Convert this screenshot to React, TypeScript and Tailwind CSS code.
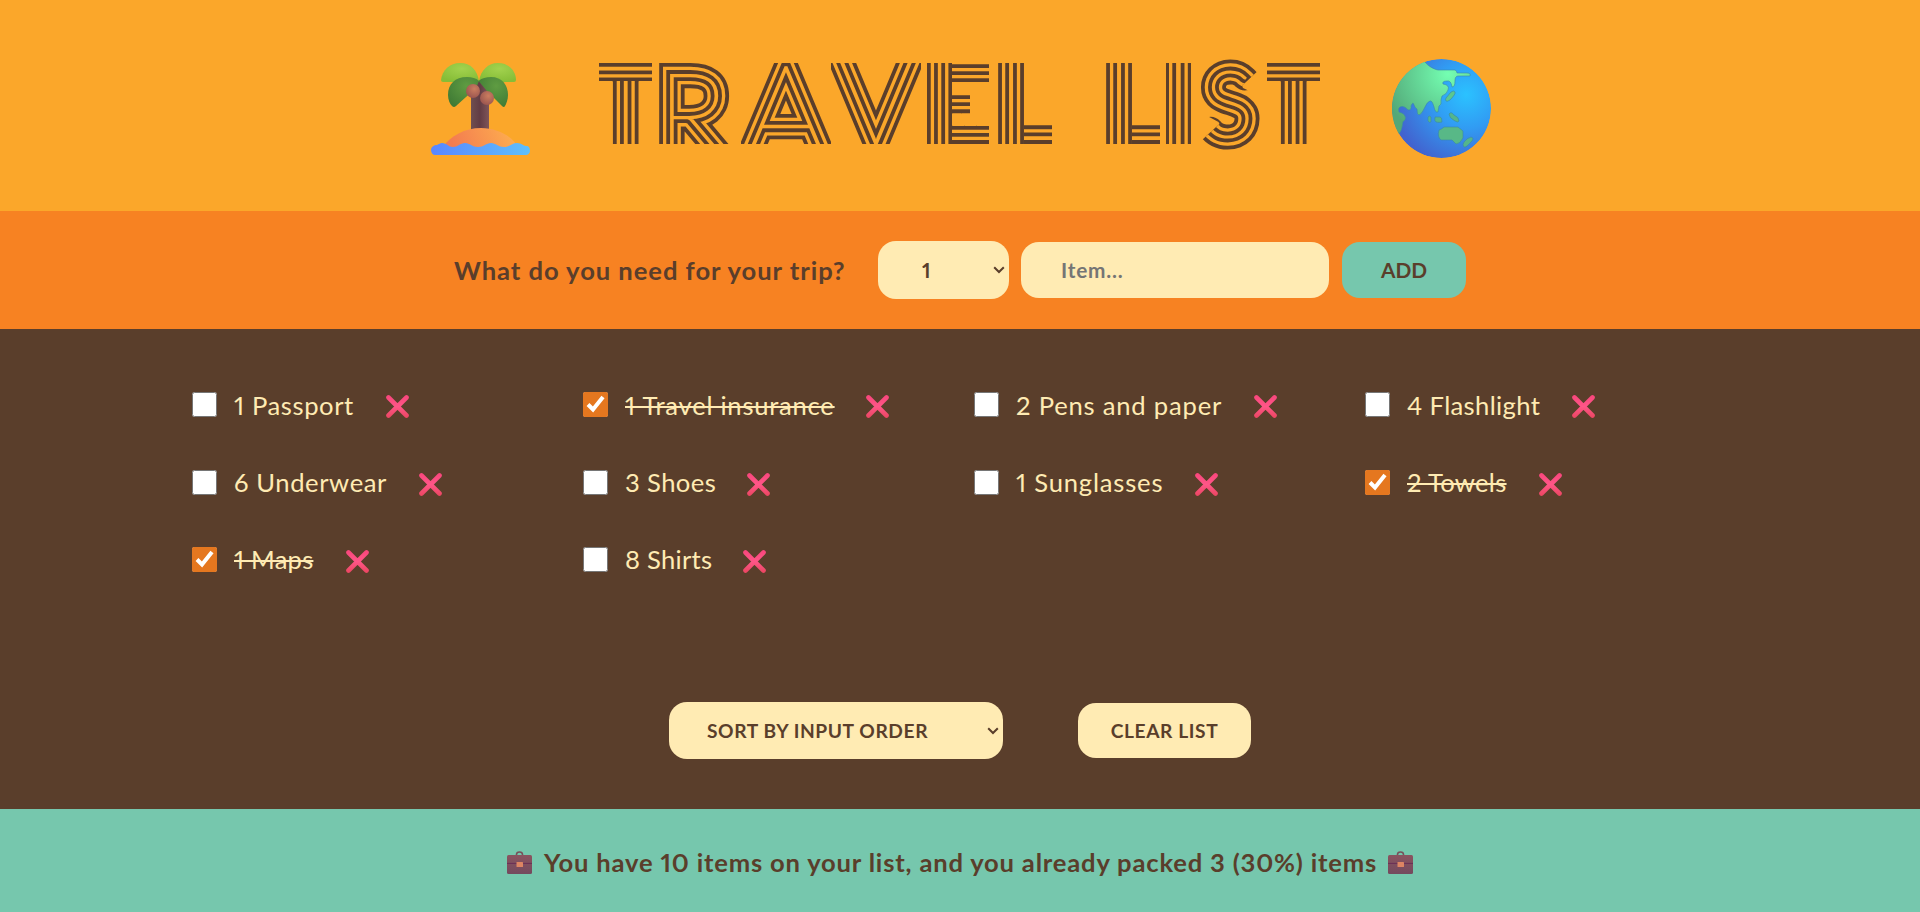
import React from "react";

/* A slice of a letter: x, y, width, height on the canvas, and how far the letter is moved inside it. */
type Slice = [number, number, number, number, number, number];
type Glyph = { ch: string; w: number; ml: number; x: number; y: number; size: number; middle?: boolean; miter?: number; clip?: string; slices?: Slice[] };

const T: Glyph = {
  ch: "T", w: 53, ml: 0, x: 26.5, y: 105.1, size: 133, middle: true,
  slices: [
    ...[0, 1, 2, 3, 4].map((k): Slice => [13 * k, 7, 13, 18, 13 * k, 0]),
    [13, 25, 27, 63, 0, 0],
  ],
};
const L: Glyph = {
  ch: "L", w: 54, ml: 0, x: -5.3, y: 83.2, size: 150,
  slices: [[0, 7, 26, 41, 0, 0], [0, 48, 26, 40, 0, 40], [26, 66, 28, 22, 0, 0]],
};
const E: Glyph = {
  ch: "E", w: 62, ml: 6, x: 0.3, y: 83, size: 101,
  slices: [
    ...Array.from({ length: 11 }, (_, k): Slice => [0, 7 + 8 * k, 25, 8, 0, 8 * k - 19]),
    ...[0, 12, 24].map((d): Slice => [25 + d, 7, 13, 19, d, 0]),
    ...[0, 9].map((d): Slice => [25 + d, 38, 9, 20, d, -2.8]),
    ...[0, 12, 24].map((d): Slice => [25 + d, 69, 13, 19, d, 0]),
  ],
};

const travel: Glyph[] = [
  T,
  { ch: "R", w: 78, ml: 7, x: -1.5, y: 101.8, size: 118, miter: 2 },
  { ch: "A", w: 90, ml: 4, x: 45, y: 102, size: 131, middle: true },
  { ch: "V", w: 90, ml: 0, x: 45, y: 88, size: 131, middle: true },
  E,
  { ...L, ml: 9 },
];

const list: Glyph[] = [
  L,
  { ch: "I", w: 25, ml: 6, x: 12.5, y: 120, size: 200, middle: true },
  {
    ch: "S", w: 64, ml: 7, x: 31, y: 80.5, size: 92, middle: true,
    clip: "M0 0H64V12L62 13 44 29.500 45 32 64 41V96H0V85L4 84 21.500 68 20.500 66 0 55Z",
  },
  { ...T, ml: 5 },
];

const bands: [string, number][] = [
  ["#5a3e2b", 24],
  ["#fba72a", 16.4],
  ["#5a3e2b", 9.8],
  ["#fba72a", 2.2],
];

function StripedLetter({ g, id }: { g: Glyph; id: string }) {
  const slices: Slice[] = g.slices ?? [[0, 0, g.w, 96, 0, 0]];
  return (
    <svg width={g.w} height="96" viewBox={`0 0 ${g.w} 96`} style={{ marginLeft: g.ml }} className="block shrink-0">
      <defs>
        <clipPath id={`${id}-clip`}>
          <path d={g.clip ?? `M0 7H${g.w}V88H0Z`} />
        </clipPath>
        <text id={id} x={g.x} y={g.y} textAnchor={g.middle ? "middle" : "start"} fontSize={g.size} fontWeight="100" fontFamily="Lato, sans-serif">
          {g.ch}
        </text>
        {slices.map(([x, y, w, h], i) => (
          <clipPath key={i} id={`${id}-slice-${i}`}>
            <rect x={x} y={y} width={w} height={h} />
          </clipPath>
        ))}
      </defs>
      <g clipPath={`url(#${id}-clip)`} strokeLinejoin="miter" strokeMiterlimit={g.miter ?? 6}>
        {slices.map(([, , , , dx, dy], i) => (
          <g key={i} clipPath={`url(#${id}-slice-${i})`}>
            {bands.map(([c, w]) => (
              <use key={w} href={`#${id}`} x={dx} y={dy} fill={c} stroke={c} strokeWidth={w} />
            ))}
          </g>
        ))}
      </g>
    </svg>
  );
}

function Palm() {
  return (
    <svg width="99" height="93" viewBox="0 0 99 93" className="block shrink-0">
      <defs>
        <linearGradient id="sea" x1="0" x2="1"><stop offset="0" stopColor="#5a86ff" /><stop offset="1" stopColor="#5fc0fb" /></linearGradient>
        <linearGradient id="sand" x1="0.1" y1="0.6" x2="1" y2="0.5"><stop offset="0" stopColor="#f37c50" /><stop offset="1" stopColor="#feb04f" /></linearGradient>
        <linearGradient id="trunk" x1="0" x2="1"><stop offset="0" stopColor="#6f4f50" /><stop offset="0.5" stopColor="#623c44" /><stop offset="1" stopColor="#7f5558" /></linearGradient>
        <radialGradient id="leafA" cx="0.55" cy="0.3" r="0.7"><stop offset="0" stopColor="#a2d24e" /><stop offset="1" stopColor="#86bd37" /></radialGradient>
        <radialGradient id="leafB" cx="0.6" cy="0.3" r="0.75"><stop offset="0" stopColor="#5f9c42" /><stop offset="1" stopColor="#407b35" /></radialGradient>
        <radialGradient id="nut" cx="0.6" cy="0.35" r="0.7"><stop offset="0" stopColor="#cb7d5f" /><stop offset="1" stopColor="#99544f" /></radialGradient>
      </defs>
      <path d="M47 18h2l9 12v40H40V30z" fill="url(#trunk)" />
      <path d="M12 84C19 73 34 65 50 65s31 8 37 19z" fill="url(#sand)" />
      <path d="M12 19q-2 0-2-2C11 7 19 0 29 0c11 0 17 7 19 18L40 19z" fill="url(#leafA)" />
      <path d="M48 18C50 7 57 0 67 0c11 0 18 8 18 17q0 2-2 2H58z" fill="url(#leafA)" />
      <path d="M48 18C45 15 41 14 36 14 24 14 17 21 17 32c0 5 2 9 4 11q2 2 4 0L45 25z" fill="url(#leafB)" />
      <path d="M47.500 18C51 15 55 14 60 14c11 0 17 8 17 18 0 5-2 9-3 11q-1 2-3 0L56 28z" fill="url(#leafB)" />
      <circle cx="42" cy="28" r="7" fill="url(#nut)" />
      <circle cx="56" cy="35" r="7" fill="url(#nut)" />
      <path d="M0 87c0-3 3-5 6-5 2-1 3-2 5-2 5 0 6 4 11 4s7-4 12-4 7 4 13 4 8-4 13-4 7 4 13 4 8-4 13-4c5 0 6 3 9 3s4 2 4 5c0 2-2 4-4 4H4c-2 0-4-2-4-5z" fill="url(#sea)" />
    </svg>
  );
}

function Globe() {
  return (
    <svg width="99" height="99" viewBox="0 0 99 99" className="block shrink-0">
      <defs>
        <radialGradient id="ocean" cx="0.75" cy="0.36" r="0.75"><stop offset="0" stopColor="#2bc2ff" /><stop offset="0.45" stopColor="#319cf3" /><stop offset="1" stopColor="#4263cf" /></radialGradient>
        <radialGradient id="land" gradientUnits="userSpaceOnUse" cx="56" cy="15" r="66"><stop offset="0" stopColor="#74ffb2" /><stop offset="1" stopColor="#53a878" /></radialGradient>
        <clipPath id="disc"><circle cx="49.5" cy="49.5" r="49.5" /></clipPath>
      </defs>
      <g clipPath="url(#disc)">
        <circle cx="49.5" cy="49.5" r="49.5" fill="url(#ocean)" />
        <g stroke="#3987ad" strokeWidth="0.6">
          <path d="M31 0C34 6 41 10 46 11h17q2 1 2 3h10q4 0 3 3H66q-3 0-3 5 0 6-3 6-1-7-5-6-5 0-4 3 7 1 5 6-1 4-6 6l-1 4q1 5-2 6l-1 6q-3 1-4-5-2-7-4-6-3 1-5 6-3 7-6 8-2 0-2-6-2-1-3-4-1-4-3 1 1 4-3 4-4-5-8-3-2 1-1 5 5 1 6 4 2 3-2 6-1 9-4 12L-2 78V0z" fill="url(#land)" />
          <path d="M54 39l5-6q3-2 4 0 1 2-5 8-3 2-4 1-1-1 0-3z" fill="#5cc78e" />
          <path d="M36 58q1-2 3 0v5q-2 1-3-1zM43 58h5q2 0 2 5-3 1-6 0-2-1-1-5zM57 55q2-3 5 1 5 2 5 6-1 2-4 0-6-3-6-7z" fill="#54b58c" />
          <path d="M47 71q3-1 5-3h14l5 4v7q-3 6-7 6l-4-4H49q-4-3-2-10z" fill="#58b887" />
          <path d="M72 83q3-4 7-5 4 1 0 5-5 6-7 5-2-2 0-5z" fill="#54b58c" />
        </g>
      </g>
    </svg>
  );
}

function Cross() {
  return (
    <svg width="23" height="23" viewBox="0 0 23 23" className="block">
      <defs>
        <linearGradient id="cross" x1="0" y1="0" x2="0" y2="23" gradientUnits="userSpaceOnUse"><stop offset="0" stopColor="#f8457b" /><stop offset="0.5" stopColor="#ff5688" /><stop offset="1" stopColor="#ea4560" /></linearGradient>
      </defs>
      <path d="M2.500 2.500l18 18M20.500 2.500l-18 18" stroke="url(#cross)" strokeWidth="4.600" strokeLinecap="round" />
    </svg>
  );
}

function Briefcase() {
  return (
    <svg width="25" height="23" viewBox="0 0 25 23" className="block shrink-0">
      <defs>
        <linearGradient id="case" x1="0" y1="0" x2="0" y2="1"><stop offset="0" stopColor="#8a535f" /><stop offset="1" stopColor="#744a5e" /></linearGradient>
      </defs>
      <path d="M9.500 4.500V3.600Q9.500 1 12.500 1t3 2.600v.9" fill="none" stroke="#76505a" strokeWidth="1.600" />
      <rect y="4" width="25" height="19" rx="1.500" fill="url(#case)" />
      <path d="M0 12.400h25" stroke="#6a2f56" strokeWidth="1" />
      <rect x="9.500" y="11" width="6.500" height="5" rx="0.600" fill="#dd8463" />
    </svg>
  );
}

function Chevron() {
  return (
    <svg width="12" height="8" viewBox="0 0 12 8" className="pointer-events-none absolute right-[4px] top-1/2 -mt-[4px]" fill="none">
      <path d="M1.200 1.200L6 6l4.800-4.800" stroke="#5a3e2b" strokeWidth="2" />
    </svg>
  );
}

type Item = { text: string; width: number; track: number; packed?: boolean };

const items: Item[] = [
  { text: "1 Passport", width: 120, track: 0.6 },
  { text: "1 Travel insurance", width: 209, track: 0.75, packed: true },
  { text: "2 Pens and paper", width: 206, track: 0.8 },
  { text: "4 Flashlight", width: 133, track: 0.35 },
  { text: "6 Underwear", width: 153, track: 0.6 },
  { text: "3 Shoes", width: 90, track: 0.4 },
  { text: "1 Sunglasses", width: 147, track: 0.8 },
  { text: "2 Towels", width: 100, track: 0.3, packed: true },
  { text: "1 Maps", width: 80, track: 0.2, packed: true },
  { text: "8 Shirts", width: 86, track: 0.25 },
];

export default function App() {
  return (
    <div className="flex h-[912px] w-[1920px] flex-col overflow-hidden bg-[#5a3e2b] font-['Lato',sans-serif] text-[#5a3e2b] proportional-nums">
      <header className="flex h-[211px] shrink-0 bg-[#fba72a] pl-[431px]">
        <div className="mt-[63px]"><Palm /></div>
        <h1 className="ml-[69px] mt-[56px] flex w-[722px]">
          <span className="flex">{travel.map((g, i) => <StripedLetter key={i} g={g} id={`travel-${i}`} />)}</span>
          {" "}
          <span className="ml-[54px] flex">{list.map((g, i) => <StripedLetter key={i} g={g} id={`list-${i}`} />)}</span>
        </h1>
        <div className="ml-[71px] mt-[59px]"><Globe /></div>
      </header>

      <form className="flex h-[118px] shrink-0 items-center bg-[#f78222] pl-[454px]">
        <h3 className="w-[424px] whitespace-nowrap text-[25.6px] font-bold tracking-[0.95px]">What do you need for your trip?</h3>
        <div className="relative">
          <select className="block h-[58px] w-[131px] appearance-none rounded-[18px] bg-[#ffebb3] px-[44px] text-[20.8px] font-bold">
            <option>1</option>
          </select>
          <Chevron />
        </div>
        <input
          placeholder="Item..."
          className="ml-[12px] h-[56px] w-[308px] rounded-[18px] bg-[#ffebb3] px-[40px] pb-[2px] text-[20.8px] font-bold tracking-[0.8px] placeholder:text-[#757575]"
        />
        <button type="button" className="ml-[13px] h-[56px] w-[124px] rounded-[18px] bg-[#76c7ad] text-[20.8px] font-bold">ADD</button>
      </form>

      <main className="flex h-[480px] shrink-0 flex-col">
        <ul className="grid h-[373px] grid-cols-[391px_391px_391px_391px] auto-rows-[77.4px] content-start pl-[192px] pt-[37px] text-[25.6px] text-[#ffebb3]">
          {items.map((it) => (
            <li key={it.text} className="flex items-center">
              <input type="checkbox" defaultChecked={it.packed} className="h-[25px] w-[25px] accent-[#e5771f]" />
              <span
                style={{ width: it.width, letterSpacing: it.track }}
                className={it.packed ? "ml-[17px] whitespace-nowrap line-through decoration-2" : "ml-[17px] whitespace-nowrap"}
              >
                {it.text}
              </span>
              <button className="ml-[32px] mt-[4px]"><Cross /></button>
            </li>
          ))}
        </ul>
        <div className="flex h-[57px] items-center pl-[669px]">
          <div className="relative">
            <select className="block h-[57px] w-[334px] appearance-none rounded-[18px] bg-[#ffebb3] px-[38px] pt-[1px] text-[19.2px] font-bold tracking-[0.58px] text-[#5a3e2b]">
              <option>SORT BY INPUT ORDER</option>
            </select>
            <Chevron />
          </div>
          <button className="ml-[75px] h-[55px] w-[173px] rounded-[18px] bg-[#ffebb3] pt-[1px] text-[19.2px] font-bold tracking-[0.6px] text-[#5a3e2b]">CLEAR LIST</button>
        </div>
      </main>

      <footer className="flex h-[103px] shrink-0 items-center bg-[#76c7ad] pl-[507px] pt-[4px]">
        <Briefcase />
        <p className="-mt-[1px] ml-[12px] w-[832px] whitespace-nowrap text-[25.6px] font-bold tracking-[0.81px]">
          You have 10 items on your list, and you already packed 3 (30%) items
        </p>
        <div className="ml-[12px]"><Briefcase /></div>
      </footer>
    </div>
  );
}
